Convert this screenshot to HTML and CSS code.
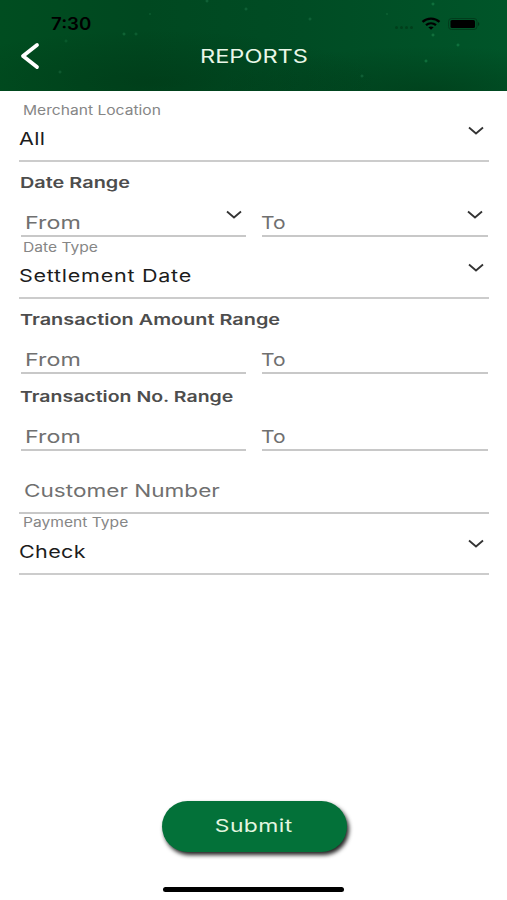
FILE: index.html
```html
<!DOCTYPE html>
<html lang="en" dir="ltr">
  <head>
    <meta charset="UTF-8" />
    <title>Reports</title>
    <link rel="stylesheet" href="styles.css">
  </head>
  <body>
    <header class="header">
      <div class="statusbar">
        <span class="wide time">7:30</span>
        <div class="status-icons">
          <span class="signal"><i></i><i></i><i></i><i></i></span>
          <svg class="wifi" viewBox="0 0 20 13" width="20" height="13">
            <path d="M1.5 4.8C6.3.5 13.7.5 18.5 4.8M5 8.2c2.9-2.5 7.1-2.5 10 0" fill="none" stroke="#000" stroke-width="2.3" />
            <path d="M7.3 10.2c1.6-1.1 3.8-1.1 5.4 0L10 12.8z" />
          </svg>
          <svg class="battery" viewBox="0 0 32 12" width="32" height="12">
            <rect x=".5" y=".5" width="28.5" height="11" rx="3" fill="none" stroke="#003d1c" />
            <rect x="2.5" y="2" width="24.5" height="8" rx="1.5" />
            <path d="M30.2 4v4c1.4-.6 1.4-3.4 0-4z" fill="#002e14" />
          </svg>
        </div>
      </div>
      <div class="titlebar">
        <svg class="back" viewBox="0 0 20 28" width="20" height="28">
          <path d="M17 3L3 14 17 25" fill="none" stroke="#fff" stroke-width="3.8" stroke-linecap="round" stroke-linejoin="round" />
        </svg>
        <h1 class="wide title">REPORTS</h1>
      </div>
    </header>

    <main class="form">
      <!-- Merchant -->
      <div class="select select-first">
        <div class="select-text">
          <span class="wide caption">Merchant Location</span>
          <span class="wide value">All</span>
        </div>
        <svg class="chevron" viewBox="0 0 18 10" width="18" height="10"><path d="M2 1.5l7 6 7-6" /></svg>
      </div>

      <!-- Date -->
      <div class="range">
        <h2 class="wide heading">Date Range</h2>
        <div class="pair">
          <div class="box from">
            <span class="wide hint">From</span>
            <svg class="chevron" viewBox="0 0 18 10" width="18" height="10"><path d="M2 1.5l7 6 7-6" /></svg>
          </div>
          <div class="box to">
            <span class="wide hint">To</span>
            <svg class="chevron" viewBox="0 0 18 10" width="18" height="10"><path d="M2 1.5l7 6 7-6" /></svg>
          </div>
        </div>
      </div>
      <div class="select select-date">
        <div class="select-text">
          <span class="wide caption">Date Type</span>
          <span class="wide value">Settlement Date</span>
        </div>
        <svg class="chevron" viewBox="0 0 18 10" width="18" height="10"><path d="M2 1.5l7 6 7-6" /></svg>
      </div>

      <!-- Transactions -->
      <div class="range">
        <h2 class="wide heading">Transaction Amount Range</h2>
        <div class="pair">
          <div class="box from"><span class="wide hint">From</span></div>
          <div class="box to"><span class="wide hint">To</span></div>
        </div>
      </div>
      <div class="range range-number">
        <h2 class="wide heading">Transaction No. Range</h2>
        <div class="pair">
          <div class="box from"><span class="wide hint">From</span></div>
          <div class="box to"><span class="wide hint">To</span></div>
        </div>
      </div>

      <!-- Customer and payment -->
      <div class="customer"><span class="wide hint">Customer Number</span></div>
      <div class="select select-last">
        <div class="select-text">
          <span class="wide caption">Payment Type</span>
          <span class="wide value">Check</span>
        </div>
        <svg class="chevron" viewBox="0 0 18 10" width="18" height="10"><path d="M2 1.5l7 6 7-6" /></svg>
      </div>
    </main>

    <footer class="footer">
      <button class="submit"><span class="wide">Submit</span></button>
      <div class="home-bar"></div>
    </footer>
  </body>
</html>
```

FILE: styles.css
```css
* {
  box-sizing: border-box;
}
body {
  display: flex;
  flex-direction: column;
  height: 900px;
  margin: 0;
  background: #fff;
  font-family: "Inter", "Liberation Sans", sans-serif;
}
.wide {
  display: inline-block;
  transform: scaleX(1.25);
  transform-origin: left center;
  white-space: nowrap;
  line-height: 20px;
}

/* header */
.header {
  height: 91px;
  background:
    radial-gradient(circle at 124px 34px, #17713f 0, transparent 2px),
    radial-gradient(circle at 136px 34px, #126838 0, transparent 2px),
    radial-gradient(circle at 66px 41px, #0d6132 0, transparent 2px),
    radial-gradient(circle at 60px 72px, #176339 0, transparent 2px),
    radial-gradient(circle at 207px 1px, #176b40 0, transparent 2px),
    radial-gradient(circle at 246px 9px, #176b40 0, transparent 2px),
    radial-gradient(circle at 150px 14px, #0f6335 0, transparent 1.5px),
    radial-gradient(circle at 310px 19px, #176b40 0, transparent 2px),
    radial-gradient(circle at 387px 14px, #126838 0, transparent 1.5px),
    radial-gradient(circle at 433px 35px, #1b8048 0, transparent 2px),
    radial-gradient(circle at 458px 45px, #178048 0, transparent 2px),
    radial-gradient(circle at 426px 61px, #178048 0, transparent 2px),
    radial-gradient(circle at 362px 76px, #176b40 0, transparent 2px),
    radial-gradient(circle at 433px 4px, #178048 0, transparent 2px),
    radial-gradient(ellipse at 30% 90%, rgba(0, 45, 15, 0.35), transparent 45%),
    radial-gradient(ellipse at 85% 100%, rgba(0, 45, 15, 0.4), transparent 35%),
    linear-gradient(90deg, #004d20 0, #004820 28%, #004c24 60%, #005529 100%);
}
.statusbar {
  display: flex;
  align-items: center;
  justify-content: space-between;
  height: 42px;
  padding: 5px 27px 0 51px;
}
.time {
  font-size: 17px;
  font-weight: 600;
  transform: scaleX(1.1);
}
.status-icons {
  display: flex;
  align-items: center;
}
.signal {
  display: flex;
  gap: 2px;
  margin: 8px 8px 0 0;
}
.signal i {
  width: 3px;
  height: 3px;
  border-radius: 50%;
  background: #003f1b;
}
.wifi {
  margin-right: 7px;
}
.titlebar {
  display: flex;
  align-items: center;
  height: 28px;
  padding-left: 20px;
}
.title {
  margin: 2px 0 0 160px;
  color: #e9f7e8;
  font-size: 18px;
  font-weight: 400;
  transform: scaleX(1.31);
}

/* form */
.form {
  flex: 1;
  padding: 0 18px 0 19px;
}
.select {
  display: flex;
  justify-content: space-between;
  height: 62px;
  padding-right: 4px;
  border-bottom: 2px solid #ccc;
}
.select-first {
  height: 71px;
  padding-top: 9px;
}
.select-last {
  height: 61px;
}
.select-last .select-text {
  margin-top: -2px;
}
.select-last .value {
  margin-top: 10px;
}
.select-last .chevron {
  margin-top: 25px;
}
.select-text {
  display: flex;
  flex-direction: column;
}
.caption {
  margin-left: 4px;
  color: #868686;
  font-size: 13px;
  transform: scaleX(1.2);
}
.value {
  margin-top: 9px;
  color: #1c1c1c;
  font-size: 17.5px;
  letter-spacing: 0.3px;
  transform: scaleX(1.23);
}
.select-date .value {
  letter-spacing: 0.6px;
}
.chevron {
  margin-top: 26px;
  fill: none;
  stroke: #333;
  stroke-width: 1.8;
}
.range {
  height: 75px;
  padding: 11px 2px 0;
}
.range-number {
  height: 77px;
  padding-top: 13px;
}
.heading {
  display: block;
  width: fit-content;
  margin: 0 0 0 -1px;
  color: #4d4d4d;
  font-size: 15px;
  font-weight: 600;
  transform: scaleX(1.325);
}
.range-number .heading {
  transform: scaleX(1.3);
}
.pair {
  display: grid;
  grid-template-columns: 225px 226px;
  gap: 16px;
}
.box {
  display: flex;
  justify-content: space-between;
  height: 44px;
  padding: 20px 4px 0 0;
  border-bottom: 2px solid #c8c8c8;
}
.box .chevron {
  margin-top: -3px;
}
.hint {
  color: #707070;
  font-size: 17.5px;
  transform: scaleX(1.29);
}
.from {
  padding-right: 3px;
  padding-left: 4px;
}
.from .hint {
  transform: scaleX(1.33);
}
.to .hint {
  margin-left: -1px;
  transform: scaleX(1.2);
}
.customer {
  height: 63px;
  padding: 30px 0 0 5px;
  border-bottom: 2px solid #c8c8c8;
}

/* footer */
.footer {
  display: flex;
  flex-direction: column;
  align-items: center;
  height: 99px;
}
.submit {
  width: 185px;
  height: 51px;
  margin-left: 1px;
  padding: 0 0 2px;
  border: 0;
  border-radius: 26px;
  background: #037139;
  box-shadow: 2px 3px 4px #222;
  color: #e4f6e0;
  font-family: inherit;
  font-size: 17.5px;
  font-weight: 400;
}
.submit .wide {
  letter-spacing: 0.3px;
  transform: scaleX(1.31);
  transform-origin: center;
}
.home-bar {
  width: 181px;
  height: 5px;
  margin-top: 35px;
  border-radius: 3px;
  background: #000;
}
```
